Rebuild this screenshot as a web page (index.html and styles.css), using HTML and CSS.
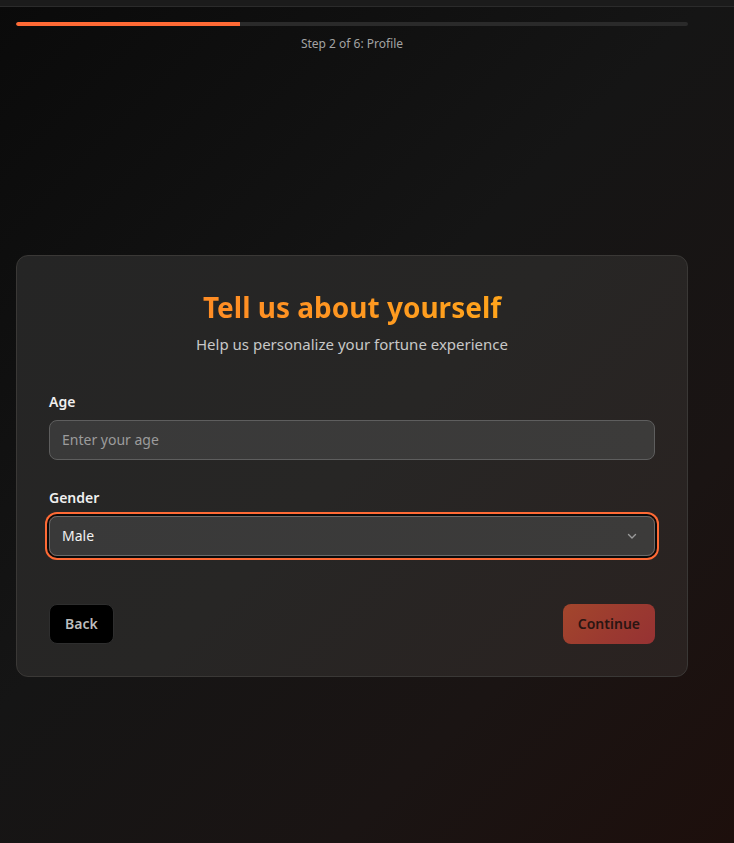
FILE: index.html
```html
<!DOCTYPE html>
<html lang="en">
<head>
<meta charset="utf-8">
<title>Profile</title>
<link rel="stylesheet" href="styles.css">
</head>
<body>
<div class="topstrip"></div>
<div class="page">
  <header class="progress">
    <div class="track"><div class="fill" style="width:33.33%"></div></div>
    <p class="step">Step 2 of 6: Profile</p>
  </header>
  <main class="main">
    <section class="card">
      <h1 class="title">Tell us about yourself</h1>
      <p class="subtitle">Help us personalize your fortune experience</p>
      <div class="field first">
        <label class="label">Age</label>
        <div class="input placeholder">Enter your age</div>
      </div>
      <div class="field">
        <label class="label">Gender</label>
        <div class="select">
          <span>Male</span>
          <svg class="chev" width="12" height="12" viewBox="0 0 12 12"><path d="M2.5 4.5 L6 8 L9.5 4.5" fill="none" stroke="#9a9a9a" stroke-width="1.4" stroke-linecap="round" stroke-linejoin="round"/></svg>
        </div>
      </div>
      <div class="actions">
        <button class="btn back">Back</button>
        <button class="btn continue">Continue</button>
      </div>
    </section>
  </main>
</div>
</body>
</html>
```

FILE: styles.css
```css
* { box-sizing: border-box; }
html, body { margin: 0; height: 100%; }
body {
  font-family: "Segoe UI", "Noto Sans", "Open Sans", sans-serif;
  background: linear-gradient(135deg, #0a0a0a 0%, #151515 45%, #1a1413 75%, #1d0f0c 100%);
  color: #e5e5e5;
  min-height: 843px;
  display: flex;
  flex-direction: column;
}
.topstrip {
  height: 7px;
  background: #1b1b1b;
  border-bottom: 1px solid #2b2b2b;
  flex: none;
}
.page {
  flex: 1;
  display: flex;
  flex-direction: column;
  padding: 0 46px 0 16px;
}
.progress {
  padding-top: 15px;
  height: 81px;
  flex: none;
}
.track {
  height: 4px;
  border-radius: 2px;
  background: #2a2a2a;
  overflow: hidden;
}
.fill {
  height: 100%;
  background: #ff6a35;
  border-radius: 2px 0 0 2px;
}
.step {
  margin: 10px 0 0;
  text-align: center;
  font-size: 12px;
  line-height: 16px;
  color: #a3a3a3;
}
.main {
  flex: 1;
  display: flex;
  align-items: center;
}
.card {
  width: 100%;
  border: 1px solid #3a3836;
  border-radius: 12px;
  background: linear-gradient(135deg, #252525 0%, #272625 50%, #2a2220 100%);
  padding: 33px 32px 32px;
}
.title {
  margin: 0;
  text-align: center;
  font-size: 28px;
  line-height: 36px;
  font-weight: 700;
  background: linear-gradient(90deg, #ff8028 0%, #ff9a20 55%, #ffb015 100%);
  -webkit-background-clip: text;
  background-clip: text;
  color: transparent;
}
.subtitle {
  margin: 8px 0 0;
  text-align: center;
  font-size: 15px;
  line-height: 22px;
  color: #c8c8c8;
}
.field { margin-top: 28px; }
.field.first { margin-top: 37px; }
.label {
  display: block;
  font-size: 14px;
  line-height: 20px;
  font-weight: 600;
  color: #f0f0f0;
  margin-bottom: 8px;
}
.input, .select {
  height: 40px;
  border-radius: 8px;
  border: 1px solid #5e5e5e;
  background: linear-gradient(90deg, #393939, #3c3b3a);
  display: flex;
  align-items: center;
  padding: 0 12px;
  font-size: 14px;
}
.placeholder { color: #9c9c9c; }
.select {
  color: #f2f2f2;
  justify-content: space-between;
  box-shadow: 0 0 0 2px #0a0a0a, 0 0 0 4px #ff6a35;
  border-color: #6a6a6a;
}
.chev { margin-right: 4px; }
.actions {
  margin-top: 48px;
  display: flex;
  justify-content: space-between;
}
.btn {
  font-family: inherit;
  height: 40px;
  border-radius: 8px;
  font-size: 14px;
  font-weight: 600;
  padding: 0 15px;
  cursor: pointer;
}
.back {
  background: #000;
  border: 1px solid #2e2e2e;
  color: #bdbdbd;
}
.continue {
  border: none;
  background: linear-gradient(135deg, #a3462c 0%, #9b3a30 55%, #963233 100%);
  color: #2a1512;
}
```
